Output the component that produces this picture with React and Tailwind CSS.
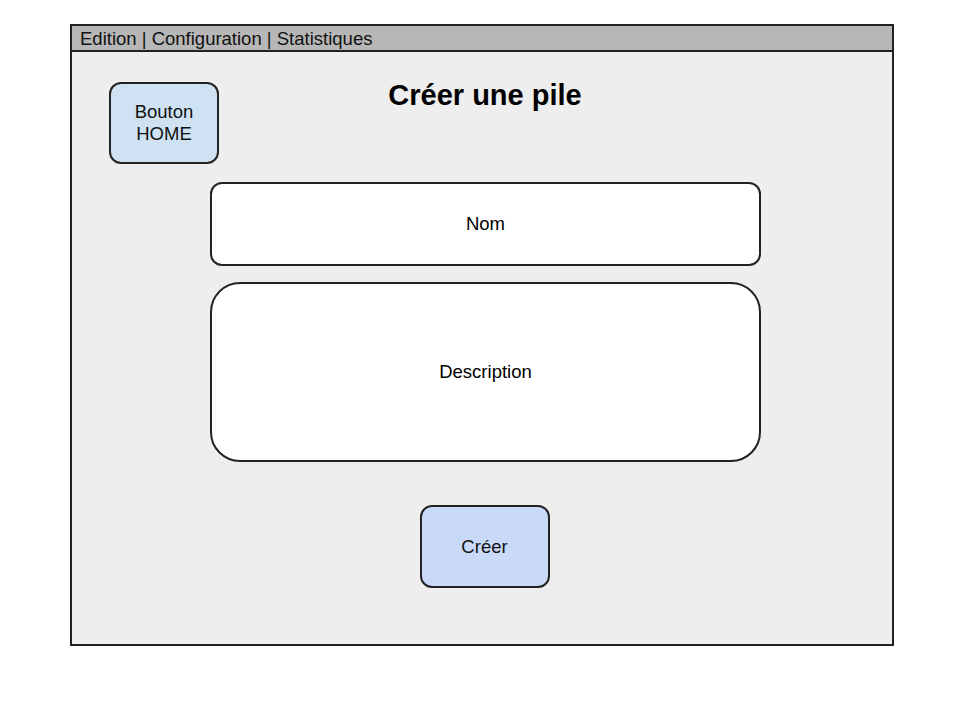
import React from 'react';

const font = { fontFamily: '"Liberation Sans", Arial, sans-serif' };

export default function App() {
  return (
    <div className="w-[960px] h-[720px] bg-white pt-[24px] pl-[70px]" style={font}>
      {/* Frame */}
      <div className="w-[824px] h-[622px] border-2 border-[#222] bg-[#eeeeee] flex flex-col">
        {/* Menu bar */}
        <div className="h-[26px] bg-[#b7b7b7] border-b-2 border-[#222] flex items-center pl-[8px] pt-[2px] text-[18.5px] text-[#111] leading-none">
          Edition | Configuration | Statistiques
        </div>

        {/* Header */}
        <div className="grid grid-cols-[1fr_auto_1fr] items-start">
          <button className="ml-[37px] mt-[30px] w-[110px] h-[82px] rounded-[12px] border-2 border-[#222] bg-[#cfe2f3] text-[18.5px] leading-[22px] text-[#111] flex flex-col items-center justify-center">
            <span>Bouton</span>
            <span>HOME</span>
          </button>
          <h1 className="mt-[25px] pl-[6px] text-[29px] font-bold text-black leading-[36px]">
            Créer une pile
          </h1>
          <div />
        </div>

        {/* Form */}
        <div className="ml-[138px] w-[551px] mt-[18px] flex flex-col">
          <div className="h-[84px] rounded-[12px] border-2 border-[#222] bg-white flex items-center justify-center text-[18.5px] text-black">
            Nom
          </div>
          <div className="mt-[16px] h-[180px] rounded-[30px] border-2 border-[#222] bg-white flex items-center justify-center text-[18.5px] text-black">
            Description
          </div>
          <button className="mt-[43px] mx-auto w-[130px] h-[83px] -translate-x-px rounded-[12px] border-2 border-[#222] bg-[#c9daf8] text-[18.5px] text-[#111] flex items-center justify-center">
            Créer
          </button>
        </div>
      </div>
    </div>
  );
}
